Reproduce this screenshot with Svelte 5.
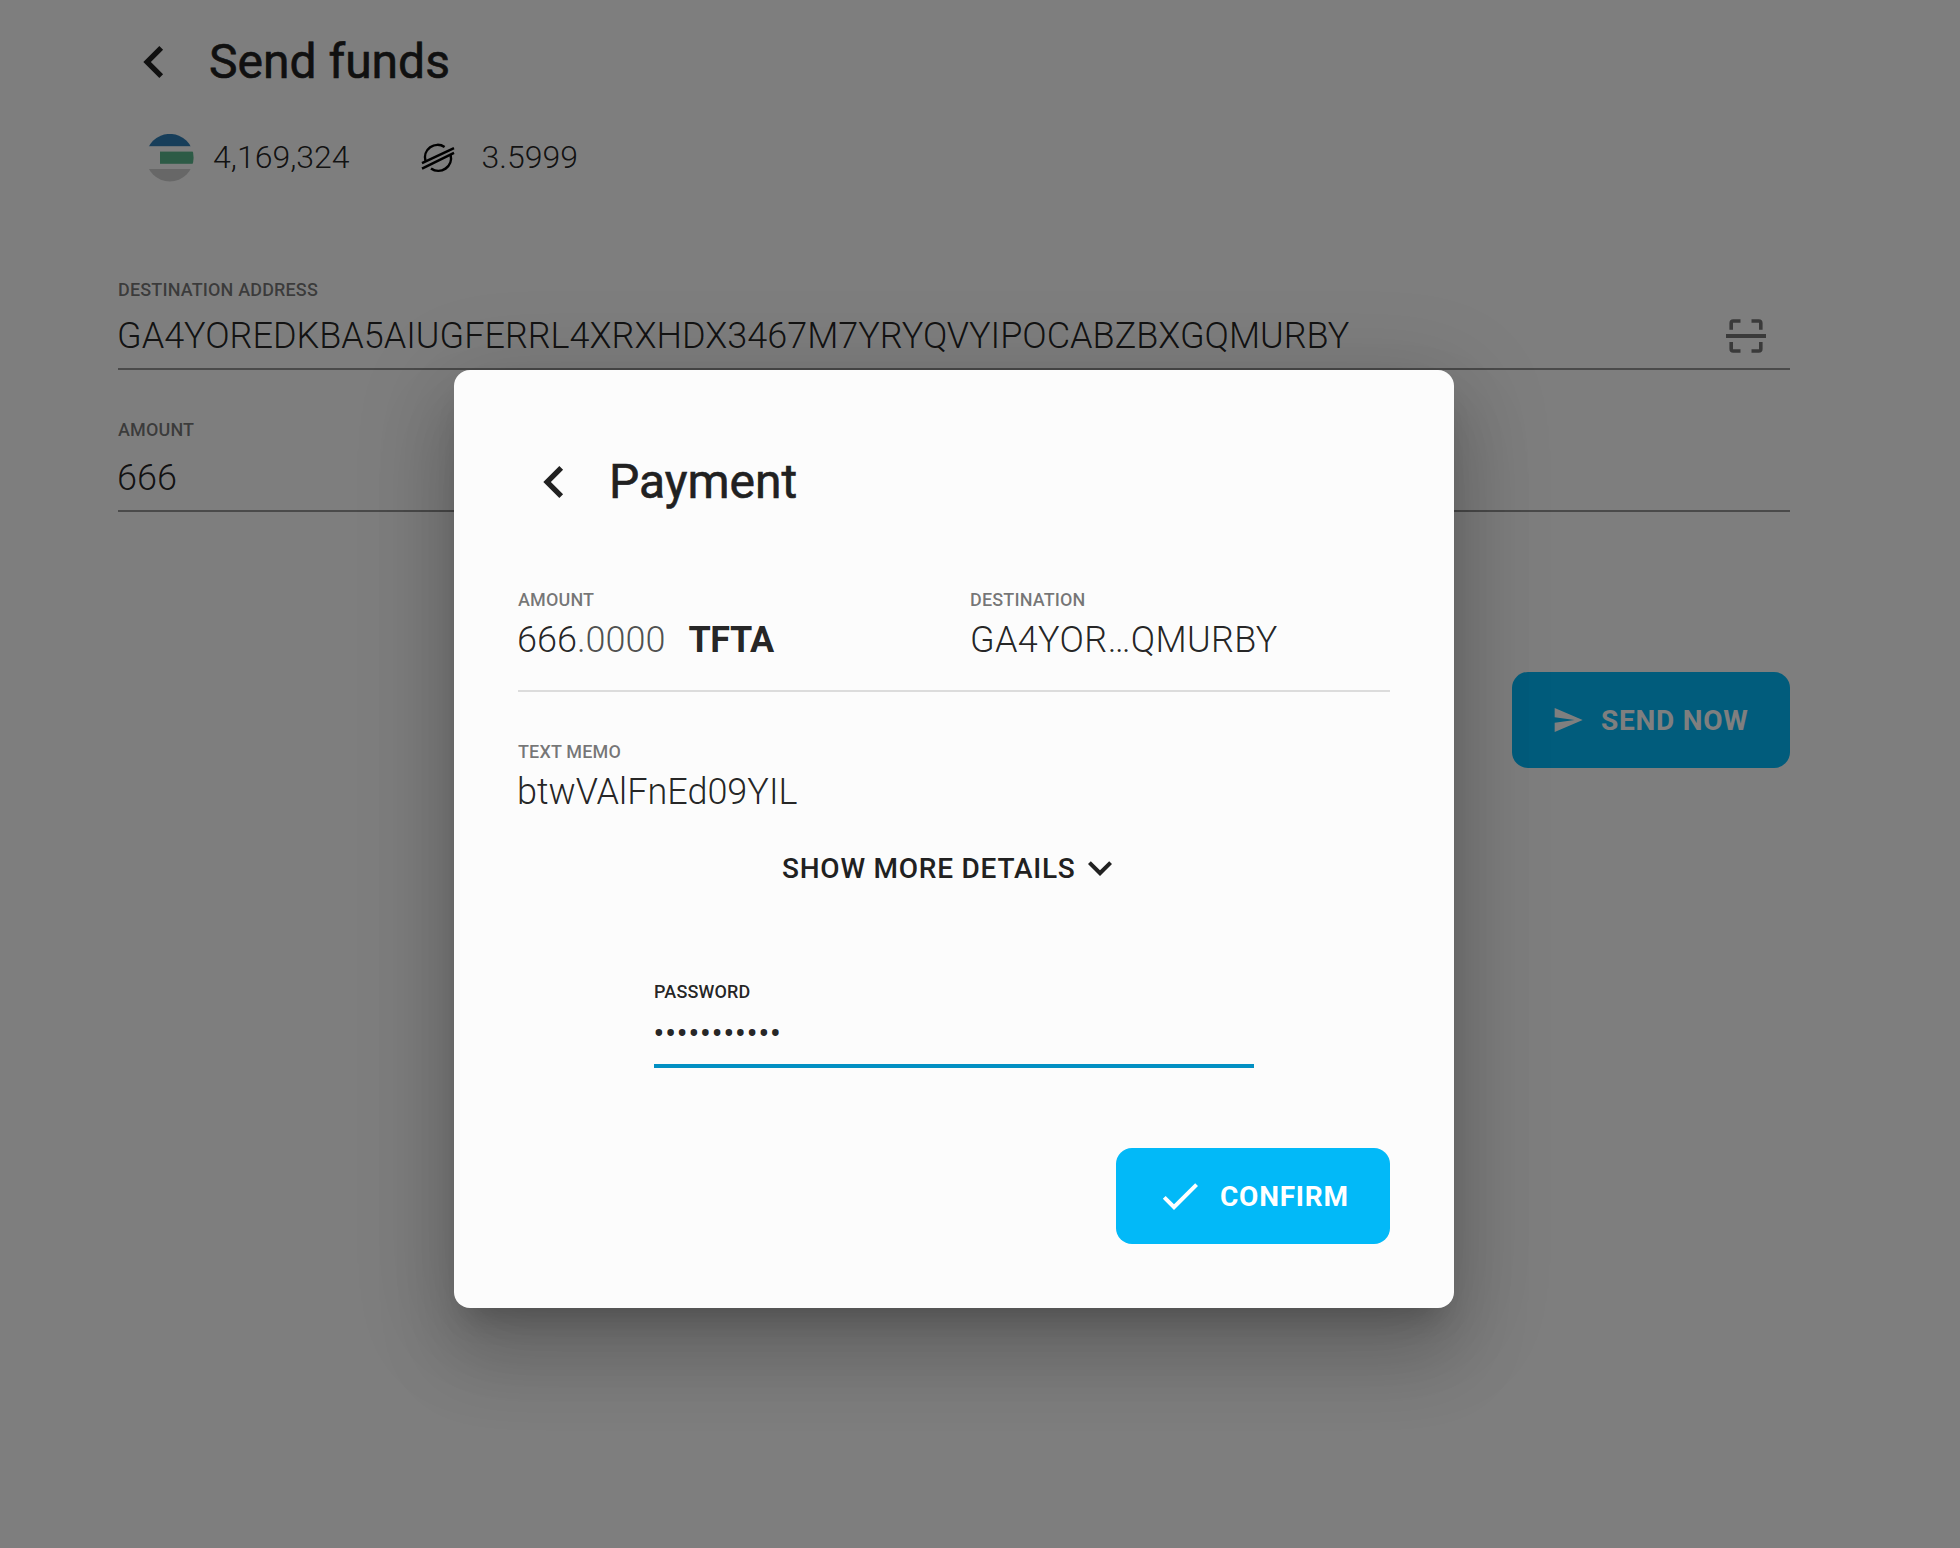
<script>
  const balances = [
    { asset: 'tft', value: '4,169,324' },
    { asset: 'xlm', value: '3.5999' },
  ];
  const fields = [
    { label: 'Destination address', value: 'GA4YOREDKBA5AIUGFERRL4XRXHDX3467M7YRYQVYIPOCABZBXGQMURBY', scan: true },
    { label: 'Amount', value: '666', scan: false },
  ];
  const password = '•'.repeat(11);
</script>

{#snippet title(text)}
  <header class="title">
    <svg class="back" viewBox="0 0 24 24"><path d="M15.41 7.41L14 6l-6 6 6 6 1.41-1.41L10.83 12z" /></svg>
    <h1>{text}</h1>
  </header>
{/snippet}

<div class="screen">
  <main class="page">
    {@render title('Send funds')}

    <div class="balances">
      {#each balances as { asset, value }}
        <div class="balance {asset}">
          {#if asset === 'tft'}
            <svg class="logo" viewBox="0 0 48 48">
              <clipPath id="disc"><circle cx="23.8" cy="23.7" r="23.8" /></clipPath>
              <g clip-path="url(#disc)">
                <rect width="48" height="12.2" fill="#2f7db5" />
                <rect x="14" y="17.6" width="34" height="12.2" fill="#5bb68c" />
                <rect y="35" width="48" height="13" fill="#cfcfcf" />
              </g>
            </svg>
          {:else}
            <svg class="logo" viewBox="0 0 48 48" fill="none" stroke="#000" stroke-width="2.5">
              <path d="M11.5 27A12.6 12.6 0 0 1 30.6 13M36.6 21A12.6 12.6 0 0 1 17 34.4" />
              <path d="M8 29.2L40 14.2M8 34.7L40 18.9" />
            </svg>
          {/if}
          <span>{value}</span>
        </div>
      {/each}
    </div>

    <div class="form">
      {#each fields as field}
        <div class="field">
          <span class="label">{field.label}</span>
          <div class="input">
            <span class="value">{field.value}</span>
            {#if field.scan}
              <svg class="scan" viewBox="0 0 40 40" fill="none" stroke="currentColor">
                <path stroke-width="4" d="M0 20H40" />
                <path stroke-width="3.6" d="M5.2 13.8V7A2 2 0 0 1 7.2 5H14.5M25.5 5H32.8A2 2 0 0 1 34.8 7V13.8M5.2 26V33A2 2 0 0 0 7.2 35H14.5M25.5 35H32.8A2 2 0 0 0 34.8 33V26" />
              </svg>
            {/if}
          </div>
        </div>
      {/each}
    </div>

    <div class="actions">
      <button class="primary send">
        <svg viewBox="0 0 24 24"><path d="M2.01 21L23 12 2.01 3 2 10l15 2-15 2z" /></svg>
        Send now
      </button>
    </div>
  </main>

  <div class="backdrop">
    <section class="dialog">
      {@render title('Payment')}

      <div class="summary">
        <div>
          <span class="label">Amount</span>
          <div class="value">666<span class="decimals">.0000</span><b>TFTA</b></div>
        </div>
        <div>
          <span class="label">Destination</span>
          <div class="value address">GA4YOR…QMURBY</div>
        </div>
      </div>

      <div class="memo">
        <span class="label">Text memo</span>
        <div class="value">btwVAlFnEd09YIL</div>
      </div>

      <button class="more">
        Show more details
        <svg viewBox="0 0 24 24"><path d="M7.41 8.59L12 13.17l4.59-4.58L18 10l-6 6-6-6z" /></svg>
      </button>

      <div class="password">
        <span class="label">Password</span>
        <div class="value">{password}</div>
      </div>

      <div class="actions">
        <button class="primary confirm">
          <svg viewBox="0 0 24 24"><path d="M9 16.17L4.83 12l-1.42 1.41L9 19 21 7l-1.41-1.41z" /></svg>
          Confirm
        </button>
      </div>
    </section>
  </div>
</div>

<style>
  :global(body) {
    margin: 0;
    background: #fcfcfc;
  }
  .screen {
    position: relative;
    width: 1960px;
    height: 1548px;
    box-sizing: border-box;
    overflow: hidden;
    background: #fcfcfc;
    color: rgba(0, 0, 0, 0.87);
    font-family: Roboto, 'Liberation Sans', sans-serif;
  }
  .page {
    padding: 30px 170px 0 118px;
  }
  .title {
    display: flex;
    align-items: center;
    height: 64px;
    padding-left: 4px;
  }
  .back {
    width: 64px;
    height: 64px;
    margin-right: 23px;
    fill: #212121;
  }
  h1 {
    margin: 0;
    color: #212121;
    font-size: 48px;
    font-weight: 400;
    line-height: 64px;
    white-space: nowrap;
    -webkit-text-stroke: 0.6px currentColor;
  }
  .balances {
    display: flex;
    gap: 64px;
    margin-top: 39px;
    padding-left: 28px;
  }
  .balance {
    display: flex;
    gap: 19px;
    font-size: 32px;
    font-weight: 300;
    line-height: 48px;
  }
  .xlm {
    gap: 20px;
  }
  .logo {
    width: 48px;
    height: 48px;
    margin-top: 1px;
  }
  .form {
    margin-top: 96px;
  }
  .field {
    margin-bottom: 48px;
    border-bottom: 2px solid #949494;
  }
  .label {
    display: block;
    color: rgba(0, 0, 0, 0.54);
    font-size: 18px;
    font-weight: 500;
    letter-spacing: 0.15px;
    line-height: 24px;
    text-transform: uppercase;
  }
  .input {
    display: flex;
    justify-content: space-between;
    padding: 10px 24px 8px 0;
  }
  .field + .field .input {
    padding-top: 12px;
  }
  .value {
    margin-left: -1px;
    font-size: 36px;
    font-weight: 300;
    line-height: 48px;
    white-space: nowrap;
  }
  .scan {
    width: 40px;
    height: 40px;
    margin-top: 4px;
    color: rgba(0, 0, 0, 0.54);
  }
  .actions {
    display: flex;
    justify-content: flex-end;
  }
  .page .actions {
    margin-top: 160px;
  }
  button {
    display: flex;
    align-items: center;
    border: 0;
    background: none;
    color: #212121;
    font-family: inherit;
    font-size: 28px;
    font-weight: 500;
    letter-spacing: 0.76px;
    text-transform: uppercase;
    white-space: nowrap;
  }
  button svg {
    flex: none;
    fill: currentColor;
  }
  .primary {
    box-sizing: border-box;
    height: 96px;
    border-radius: 16px;
    background: #02b9f8;
    color: #fff;
    font-weight: 700;
  }
  .send {
    width: 278px;
    padding: 0 0 0 40px;
  }
  .send svg {
    width: 32px;
    height: 32px;
    margin-right: 17px;
  }
  .backdrop {
    position: absolute;
    inset: 0;
    display: flex;
    justify-content: center;
    align-items: flex-start;
    padding: 370px 52px 0 0;
    background: rgba(0, 0, 0, 0.5);
  }
  .dialog {
    box-sizing: border-box;
    width: 1000px;
    height: 938px;
    padding: 80px 64px 64px;
    border-radius: 16px;
    background: #fcfcfc;
    box-shadow:
      0 22px 30px -14px rgba(0, 0, 0, 0.2),
      0 48px 76px 6px rgba(0, 0, 0, 0.14),
      0 18px 92px 16px rgba(0, 0, 0, 0.12);
  }
  .summary {
    display: grid;
    grid-template-columns: 452px 1fr;
    margin-top: 74px;
    padding-bottom: 26px;
    border-bottom: 2px solid #dcdcdc;
  }
  .dialog .value {
    margin-top: 4px;
  }
  .dialog .address {
    margin-left: 0;
    letter-spacing: 0.33px;
  }
  .decimals {
    opacity: 0.8;
  }
  b {
    margin-left: 23px;
    font-weight: 700;
    letter-spacing: -0.4px;
  }
  .memo {
    margin-top: 48px;
  }
  .more {
    height: 48px;
    margin: 28px 0 0 264px;
    padding: 0;
  }
  .more svg {
    width: 48px;
    height: 48px;
  }
  .password {
    width: 600px;
    margin: 88px 0 80px 136px;
    border-bottom: 4px solid #0290c3;
  }
  .password .label {
    color: inherit;
  }
  .dialog .password .value {
    margin: 6px 0 6px -1px;
  }
  .confirm {
    width: 274px;
    padding: 0 0 0 40px;
  }
  .confirm svg {
    width: 48px;
    height: 48px;
    margin-right: 16px;
  }
</style>
